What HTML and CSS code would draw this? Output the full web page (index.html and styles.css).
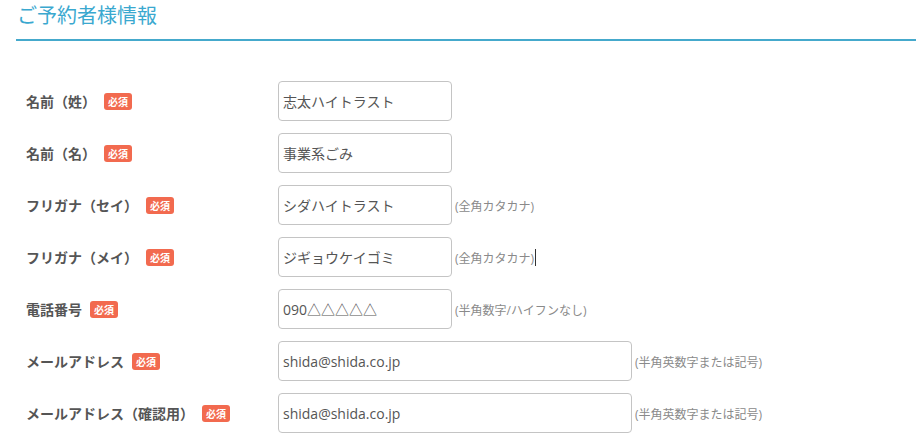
FILE: index.html
```html
<!DOCTYPE html>
<html>
<head>
	<meta charset="utf-8">
	<title>ご予約者様情報</title>
	<link rel="stylesheet" href="styles.css">
</head>
<body>
	<div class="section">
		<h2 class="section-title">ご予約者様情報</h2>
		<div class="form">
			<div class="row">
				<div class="label">名前（姓）<span class="req">必須</span></div>
				<div class="field"><input class="input" type="text" value="志太ハイトラスト"></div>
			</div>
			<div class="row">
				<div class="label">名前（名）<span class="req">必須</span></div>
				<div class="field"><input class="input" type="text" value="事業系ごみ"></div>
			</div>
			<div class="row">
				<div class="label">フリガナ（セイ）<span class="req">必須</span></div>
				<div class="field"><input class="input" type="text" value="シダハイトラスト"><span class="hint">(全角カタカナ)</span></div>
			</div>
			<div class="row">
				<div class="label">フリガナ（メイ）<span class="req">必須</span></div>
				<div class="field"><input class="input" type="text" value="ジギョウケイゴミ"><span class="hint">(全角カタカナ)</span><span class="caret"></span></div>
			</div>
			<div class="row">
				<div class="label">電話番号<span class="req">必須</span></div>
				<div class="field"><input class="input" type="text" value="090△△△△△"><span class="hint">(半角数字/ハイフンなし)</span></div>
			</div>
			<div class="row">
				<div class="label">メールアドレス<span class="req">必須</span></div>
				<div class="field"><input class="input input-wide" type="text" value="shida@shida.co.jp"><span class="hint">(半角英数字または記号)</span></div>
			</div>
			<div class="row">
				<div class="label">メールアドレス（確認用）<span class="req">必須</span></div>
				<div class="field"><input class="input input-wide" type="text" value="shida@shida.co.jp"><span class="hint">(半角英数字または記号)</span></div>
			</div>
		</div>
	</div>
</body>
</html>
```

FILE: styles.css
```css
html{background: #fff;}
body{margin: 0; font-family: "Open Sans", "Noto Sans CJK JP", sans-serif; color: #444;}
.section{width: 900px; margin-left: 16px;}
.section-title{margin: 0; padding: 1px 0 0 1px; height: 38px; line-height: 30px; font-size: 20px; font-weight: normal; color: #3aa8cf; border-bottom: 2px solid #45a9cc; box-sizing: content-box;}
.form{padding-top: 40px;}
.row{display: flex; align-items: center; height: 40px; margin-bottom: 12px;}
.label{width: 262px; padding-left: 10px; box-sizing: border-box; display: flex; align-items: center; font-size: 14px; font-weight: bold; color: #555; font-family: "Noto Sans CJK JP", sans-serif;}
.req{display: inline-block; width: 28px; height: 17px; line-height: 17px; margin-left: 8px; text-align: center; background: #f26a4f; color: #fff; font-size: 10px; font-weight: bold; border-radius: 3px;}
.field{display: flex; align-items: center;}
.input{width: 174px; height: 40px; box-sizing: border-box; margin: 0; padding: 0 4px; border: 1px solid #c4c4c4; border-radius: 4px; font-family: "Open Sans", "Noto Sans CJK JP", sans-serif; font-size: 14px; color: #555; background: #fff; outline: none;}
.input-wide{width: 354px;}
.hint{margin-left: 3px; font-size: 12px; color: #8a8a8a; padding-top: 2px;}
.caret{display: inline-block; width: 1px; height: 17px; background: #333; margin-left: 1px;}
```
